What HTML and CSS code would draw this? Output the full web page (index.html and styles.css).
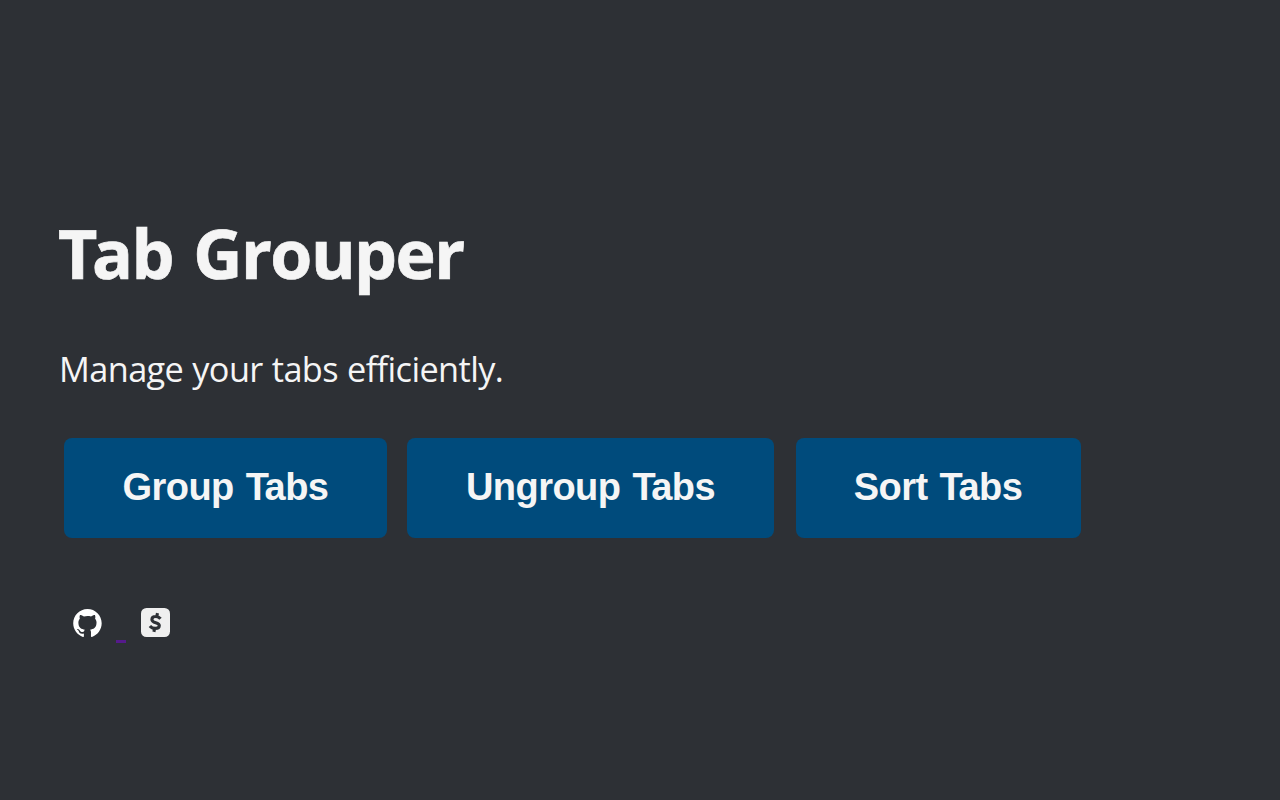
FILE: index.html
```html
<!DOCTYPE html>
<html lang="en">
<head>
<meta charset="utf-8">
<title>Tab Grouper</title>
<link rel="stylesheet" href="styles.css">
</head>
<body>
<main class="popup">
  <h1 class="title"><span class="kern">T</span>ab Grouper</h1>
  <p class="tagline">Manage your tabs efficiently.</p>
  <div class="actions">
    <button class="button group">Group <span class="kern-small">T</span>abs</button>
    <button class="button ungroup">Ungroup <span class="kern-small">T</span>abs</button>
    <button class="button sort">Sort <span class="kern-small">T</span>abs</button>
  </div>
  <div class="links">
    <a class="link" href="#" aria-label="GitHub"><svg class="github" viewBox="0 0 98 96"><path fill="#fff" fill-rule="evenodd" clip-rule="evenodd" d="M48.854 0C21.839 0 0 22 0 49.217c0 21.756 13.993 40.172 33.405 46.690 2.427.49 3.316-1.059 3.316-2.362 0-1.141-.08-5.052-.08-9.127-13.590 2.934-16.420-5.867-16.420-5.867-2.184-5.704-5.420-7.170-5.420-7.170-4.448-3.015.324-3.015.324-3.015 4.934.326 7.523 5.052 7.523 5.052 4.367 7.496 11.404 5.378 14.235 4.074.404-3.178 1.699-5.378 3.074-6.600-10.839-1.141-22.243-5.378-22.243-24.283 0-5.378 1.940-9.778 5.014-13.200-.485-1.222-2.184-6.275.486-13.038 0 0 4.125-1.304 13.426 5.052a46.970 46.970 0 0 1 12.214-1.630c4.125 0 8.330.571 12.213 1.630 9.302-6.356 13.427-5.052 13.427-5.052 2.670 6.763.97 11.816.485 13.038 3.155 3.422 5.015 7.822 5.015 13.200 0 18.905-11.404 23.060-22.324 24.283 1.780 1.548 3.316 4.481 3.316 9.126 0 6.600-.08 11.897-.08 13.526 0 1.304.89 2.853 3.316 2.364 19.412-6.520 33.405-24.935 33.405-46.691C97.707 22 75.788 0 48.854 0z"/></svg></a>
    <span class="underline"></span>
    <a class="link" href="#" aria-label="Donate"><svg class="donate" viewBox="0 0 29 29"><rect width="29" height="29" rx="5.5" fill="#efefef"/><path d="M19.500 10.800C18.300 9.300 16.800 8.500 15 8.500c-2.300 0-4.100 1-4.100 2.900 0 4.200 7.400 2.300 7.400 6 0 1.900-1.700 3-4 3-2.200 0-4.100-.9-5.400-2.500M16.500 5.200l-.8 3.500M13.700 20l-.8 3.900" fill="none" stroke="#2d3035" stroke-width="3.100"/></svg></a>
  </div>
</main>
</body>
</html>
```
FILE: styles.css
```css
body {
  margin: 0;
  background: #2d3035;
  color: #f5f5f5;
  font-family: "Open Sans", "Noto Sans", sans-serif;
}
.popup {
  box-sizing: border-box;
  height: 800px;
  padding: 205px 59px 0 58px;
  overflow: hidden;
}
.title {
  margin: 0;
  height: 96px;
  font-size: 68px;
  line-height: 96px;
  font-weight: 700;
  letter-spacing: -1.5px;
  word-spacing: 4px;
  -webkit-text-stroke: 0.7px #f5f5f5;
}
.kern { letter-spacing: -5.5px; }
.tagline {
  margin: 44px 0 0 1px;
  height: 48px;
  font-size: 34.3px;
  line-height: 48px;
  letter-spacing: -0.6px;
  word-spacing: 0.7px;
}
.actions {
  display: flex;
  padding: 45px 0 0 6px;
}
.button {
  height: 100px;
  padding: 0 0 2px;
  border: 0;
  border-radius: 8px;
  background: #004b7c;
  color: #f5f5f5;
  font: 700 38px "Liberation Sans", Arial, sans-serif;
  letter-spacing: -0.55px;
  word-spacing: 2px;
}
.kern-small { letter-spacing: -4.4px; }
.group { width: 323px; }
.ungroup { width: 367px; margin-left: 20px; }
.sort { width: 285px; margin-left: 22px; padding-right: 1px; }
.links {
  display: flex;
  padding: 70px 0 0 14px;
}
.link { display: flex; }
.github { width: 29px; height: 28px; margin: 1px 0 0 1px; }
.donate { width: 29px; height: 29px; }
.underline {
  width: 10px;
  height: 3px;
  margin: 32px 15px 0 14px;
  background: #551a8b;
}
```
